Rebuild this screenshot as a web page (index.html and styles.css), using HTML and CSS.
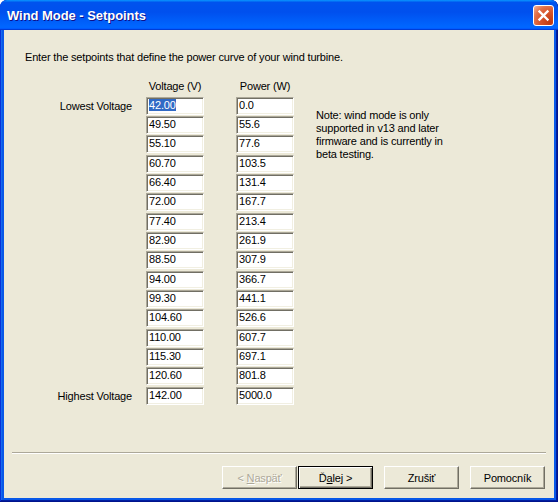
FILE: index.html
```html
<!DOCTYPE html>
<html>
<head>
<meta charset="utf-8">
<title>Wind Mode - Setpoints</title>
<link rel="stylesheet" href="styles.css">
</head>
<body>
<div class="window">
  <div class="titlebar">
    <span class="title">Wind Mode - Setpoints</span>
    <div class="close">
      <svg width="19" height="19" viewBox="0 0 19 19"><path d="M5.5 5.5 L13.5 13.5 M13.5 5.5 L5.5 13.5" stroke="#fff" stroke-width="2.4" stroke-linecap="square"/></svg>
    </div>
  </div>
  <div class="client">
    <div class="content">
      <p class="intro">Enter the setpoints that define the power curve of your wind turbine.</p>
      <div class="grid">
        <div class="hdr c2">Voltage (V)</div>
        <div class="hdr c3">Power (W)</div>

        <div class="lbl c1">Lowest Voltage</div>
        <div class="field c2"><span class="sel">42.00</span></div>
        <div class="field c3">0.0</div>

        <div class="field c2">49.50</div><div class="field c3">55.6</div>
        <div class="field c2">55.10</div><div class="field c3">77.6</div>
        <div class="field c2">60.70</div><div class="field c3">103.5</div>
        <div class="field c2">66.40</div><div class="field c3">131.4</div>
        <div class="field c2">72.00</div><div class="field c3">167.7</div>
        <div class="field c2">77.40</div><div class="field c3">213.4</div>
        <div class="field c2">82.90</div><div class="field c3">261.9</div>
        <div class="field c2">88.50</div><div class="field c3">307.9</div>
        <div class="field c2">94.00</div><div class="field c3">366.7</div>
        <div class="field c2">99.30</div><div class="field c3">441.1</div>
        <div class="field c2">104.60</div><div class="field c3">526.6</div>
        <div class="field c2">110.00</div><div class="field c3">607.7</div>
        <div class="field c2">115.30</div><div class="field c3">697.1</div>
        <div class="field c2">120.60</div><div class="field c3">801.8</div>

        <div class="lbl c1">Highest Voltage</div>
        <div class="field c2">142.00</div>
        <div class="field c3">5000.0</div>

        <div class="note">Note: wind mode is only supported in v13 and later firmware and is currently in beta testing.</div>
      </div>
    </div>
    <div class="footer">
      <div class="sep"></div>
      <div class="buttons">
        <div class="btn disabled"><span>&lt; <u>N</u>aspäť</span></div>
        <div class="btn default"><span>Ď<u>a</u>lej &gt;</span></div>
        <div class="btn"><span>Zrušiť</span></div>
        <div class="btn"><span>Pomocník</span></div>
      </div>
    </div>
  </div>
</div>
</body>
</html>
```

FILE: styles.css
```css
html, body {
  margin: 0;
  padding: 0;
  background: #ffffff;
}

body {
  font-family: "Liberation Sans", Arial, sans-serif;
  font-size: 11px;
  letter-spacing: -0.17px;
  color: #000;
}

.window {
  width: 558px;
  height: 502px;
  display: flex;
  flex-direction: column;
  background: #0858e8;
  border-radius: 7px 7px 0 0;
  box-shadow: inset -1px -1px #00138c, inset 1px 1px #0831d9, inset -2px -2px #001ea0, inset 2px 2px #166aee;
  overflow: hidden;
}

.titlebar {
  height: 30px;
  flex: none;
  display: flex;
  align-items: flex-start;
  justify-content: space-between;
  background: linear-gradient(180deg, #0997ff, #0053ee 8%, #0050ee 40%, #0066ff 88%, #0066ff 93%, #005bff 95%, #003dd7 96%, #003dd7);
  border-radius: 7px 7px 0 0;
}

.title {
  color: #fff;
  font-family: "Liberation Sans", Arial, sans-serif;
  font-weight: bold;
  font-size: 13px;
  letter-spacing: -0.05px;
  line-height: 16px;
  margin: 8px 0 0 7px;
  text-shadow: 1px 1px #0f1089;
}

.close {
  width: 21px;
  height: 21px;
  box-sizing: border-box;
  margin: 5px 4px 0 0;
  border: 1px solid #fff;
  border-radius: 3px;
  background: radial-gradient(circle at 85% 85%, #c03a10 0%, #d8552c 45%, #e2714a 70%, #f4b49a 100%);
  display: flex;
  align-items: center;
  justify-content: center;
}

.close svg {
  display: block;
}

.client {
  flex: 1;
  margin: 0 4px 4px 4px;
  background: #ece9d8;
  display: flex;
  flex-direction: column;
}

.content {
  flex: 1;
  padding: 21px 0 0 21px;
}

.intro {
  margin: 0;
  line-height: 13px;
}

.grid {
  margin-top: 16px;
  display: grid;
  grid-template-columns: 121px 90px 80px 1fr;
  grid-template-rows: 17px repeat(5, 19px 19px 20px) 19px;
}

.c1 { grid-column: 1; }
.c2 { grid-column: 2; }
.c3 { grid-column: 3; }

.hdr {
  width: 58px;
  text-align: center;
  line-height: 13px;
  white-space: nowrap;
}

.lbl {
  height: 18px;
  display: flex;
  align-items: center;
  justify-content: flex-end;
  padding-right: 14px;
  white-space: nowrap;
}

.field {
  width: 58px;
  height: 18px;
  box-sizing: border-box;
  background: #fff;
  border: 1px solid;
  border-color: #aca899 #ffffff #ffffff #aca899;
  box-shadow: inset 1px 1px #716f64, inset -1px -1px #f1efe2;
  padding: 0 0 0 2px;
  line-height: 15px;
  white-space: nowrap;
}

.sel {
  background: #316ac5;
  color: #fff;
}

.note {
  grid-column: 4;
  grid-row: 2 / span 5;
  align-self: start;
  margin-top: 12px;
  width: 140px;
  line-height: 13px;
}

.footer {
  flex: none;
  padding-bottom: 9px;
}

.sep {
  height: 1px;
  margin: 0 8px;
  background: #aca899;
  border-bottom: 1px solid #fff;
}

.buttons {
  margin-top: 12px;
  display: flex;
  justify-content: flex-end;
  padding-right: 9px;
}

.btn {
  width: 75px;
  height: 23px;
  box-sizing: border-box;
  display: flex;
  align-items: center;
  justify-content: center;
  background: #ece9d8;
  border: 1px solid;
  border-color: #ffffff #716f64 #716f64 #ffffff;
  box-shadow: inset -1px -1px #aca899;
  margin-left: 11px;
  white-space: nowrap;
}

.btn.disabled {
  margin-left: 0;
  color: #aca899;
  text-shadow: 1px 1px #fff;
}

.btn.default {
  margin-left: 1px;
  border: 1px solid #000;
  box-shadow: inset 1px 1px #fff, inset -1px -1px #716f64, inset -2px -2px #aca899;
}
```
